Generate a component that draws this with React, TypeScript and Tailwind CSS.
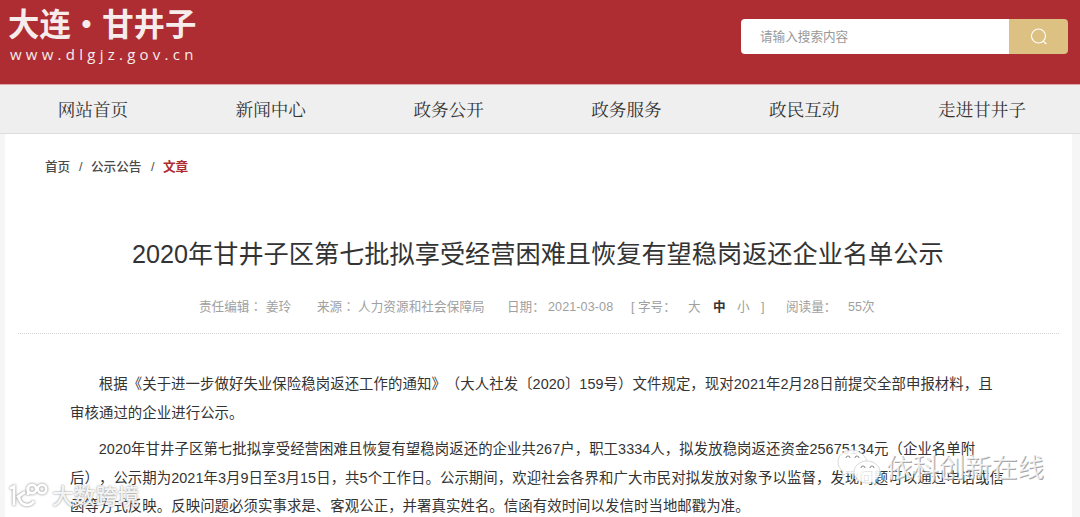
const navItems = ["网站首页", "新闻中心", "政务公开", "政务服务", "政民互动", "走进甘井子"];

function Header() {
  return (
    <header className="flex h-[84px] justify-between bg-[#ad2d32] pr-3">
      <div className="flex w-[210px] flex-col pl-2 text-[#f6ecec]">
        <h1 className="mt-[7px] h-[37px] whitespace-nowrap text-[31.4px] font-bold leading-[38px]">大连・甘井子</h1>
        <p className="ml-[2px] h-[22px] whitespace-nowrap font-['Open_Sans'] text-[15px] leading-[21px] tracking-[4.25px]">www.dlgjz.gov.cn</p>
      </div>

      <div className="mt-[19px] flex h-[35px] w-[327px] overflow-hidden rounded">
        <input
          type="text"
          placeholder="请输入搜索内容"
          className="w-[268px] bg-white pl-[19px] pt-[1px] text-[12.6px] placeholder:text-[#999999]"
        />
        <button className="flex flex-1 items-center justify-center bg-[#dcc183]">
          <svg width="18" height="18" viewBox="0 0 18 18" fill="none" stroke="white" strokeWidth="1.1">
            <circle cx="8.5" cy="8" r="7" />
            <path d="M13 13 L16.4 16" />
          </svg>
        </button>
      </div>
    </header>
  );
}

function Nav() {
  return (
    <nav className="h-[50px] border-t border-b border-t-[#dfa5a8] border-b-[#dcdcdc] bg-[#efefef] pl-1 pr-[9px]">
      <div className="grid h-full grid-cols-6">
        {navItems.map((item) => (
          <a
            key={item}
            className="flex items-center justify-center pt-[2px] font-['Liberation_Serif','Noto_Serif_CJK_SC','Noto_Sans_CJK_SC',serif] text-[17.6px] text-[#333333]"
          >
            {item}
          </a>
        ))}
      </div>
    </nav>
  );
}

function ArticleMeta() {
  return (
    <div className="mx-[13px] flex h-[50px] whitespace-pre border-b border-dotted border-[#d4d4d4] pl-[181px] text-[12.6px] leading-[46px] text-[#a0a0a0]">
      <span className="w-[67px]">
        责任编辑<span className="font-['Noto_Sans_CJK_TC'] leading-none" lang="zh-TW">：</span>
      </span>
      <span className="w-[51px]">姜玲</span>
      <span className="w-[41px]">
        来源<span className="font-['Noto_Sans_CJK_TC'] leading-none" lang="zh-TW">：</span>
      </span>
      <span className="w-[149px] tracking-[0.08px]">人力资源和社会保障局</span>
      <span className="w-[41px]">日期：</span>
      <span className="w-[83px] tracking-[0.08px]">2021-03-08</span>
      <span className="w-[57px]">[ 字号：</span>
      <span className="w-[25px]">大</span>
      <span className="w-[24px] font-bold text-[#333333]">中</span>
      <span className="w-[24px]">小</span>
      <span className="w-[25px]">]</span>
      <span className="w-[62px]">阅读量：</span>
      <span>55次</span>
    </div>
  );
}

function ArticleBody() {
  return (
    <div className="ml-[65px] mt-[36px] whitespace-nowrap text-[14.4px] leading-[28.6px] tracking-[0.07px] text-[#333333] [text-spacing-trim:space-all]">
      <p className="indent-[28.8px]">
        根据《关于进一步做好失业保险稳岗返还工作的通知》（大人社发〔2020〕159号）文件规定，现对2021年2月28日前提交全部申报材料，且
        <br />
        审核通过的企业进行公示。
      </p>
      <p className="mt-2 indent-[28.8px]">
        2020年甘井子区第七批拟享受经营困难且恢复有望稳岗返还的企业共267户，职工3334人，拟发放稳岗返还资金25675134元（企业名单附
        <br />
        后），公示期为2021年3月9日至3月15日，共5个工作日。公示期间，欢迎社会各界和广大市民对拟发放对象予以监督，发现问题可以通过电话或信
        <br />
        函等方式反映。反映问题必须实事求是、客观公正，并署真实姓名。信函有效时间以发信时当地邮戳为准。
      </p>
    </div>
  );
}

// wechat account + site watermarks, they sit over the article text
function Watermarks() {
  return (
    <>
      <div className="absolute left-[837px] top-[449px] flex">
        <svg width="46" height="38" viewBox="0 0 46 38" fill="white" fillOpacity="0.88" stroke="#c8c8c8" strokeWidth="0.7">
          <path d="M15 1C7 1 1 6 1 13c0 4 2 7 5 9l-1 5 5-3c2 1 4 1 6 1 8 0 14-5 14-11S23 1 15 1z" />
          <path d="M30 12c-7 0-13 5-13 11s6 11 13 11c2 0 3 0 5-1l4 3-1-5c3-2 5-5 5-8 0-6-6-11-13-11z" />
          <g fill="none" stroke="#888888" strokeWidth="1">
            <path d="M9 9a2 2 0 0 1 4 0" />
            <path d="M18 9a2 2 0 0 1 4 0" />
            <path d="M24 19a2 2 0 0 1 4 0" />
            <path d="M33 19a2 2 0 0 1 4 0" />
          </g>
        </svg>
        <span className="ml-[3px] whitespace-nowrap text-[26.3px] leading-[38px] text-white/75 [text-shadow:1px_1px_0px_#a8a8a8]">依科创新在线</span>
      </div>
      <div className="absolute left-[8px] top-[481px] flex">
        <svg
          width="42"
          height="30"
          viewBox="0 0 42 30"
          fill="none"
          stroke="white"
          strokeWidth="2.8"
          className="drop-shadow-[0_0_1px_#777777]"
        >
          <path d="M2 7.500l4-2v19" />
          <path d="M17 11l-8 5.500M11 15c0 5 3 9 8 9 3 0 5-1 7-4" />
          <path d="M20 14V6" />
          <circle cx="24" cy="8" r="4.200" />
          <circle cx="34" cy="8" r="4.200" />
        </svg>
        <span className="ml-[2px] whitespace-nowrap text-[21.8px] font-medium leading-[32px] text-white/90 [text-shadow:0_0_2px_#777777]">大数跨境</span>
      </div>
    </>
  );
}

function App() {
  return (
    <div className="relative h-[517px] w-[1080px] overflow-hidden bg-[#f6f6f6] font-['Liberation_Sans','Noto_Sans_CJK_SC',sans-serif]">
      <Header />
      <Nav />
      <main className="ml-[5px] h-[383px] w-[1067px] bg-white">
        <div className="flex h-[66px] items-center whitespace-pre pl-10 text-[12.6px] font-medium text-[#4a4a4a]">
          <span className="w-[34px]">首页</span>
          <span className="w-[12px]">/</span>
          <span className="w-[60px]">公示公告</span>
          <span className="w-[12px]">/</span>
          <span className="font-bold text-[#ad2d32]">文章</span>
        </div>
        <h2 className="mt-[35px] h-[49px] whitespace-nowrap pl-[127px] text-[25.2px] leading-[38px] text-[#333333]">
          2020年甘井子区第七批拟享受经营困难且恢复有望稳岗返还企业名单公示
        </h2>
        <ArticleMeta />
        <ArticleBody />
      </main>
      <Watermarks />
    </div>
  );
}

export default App;
